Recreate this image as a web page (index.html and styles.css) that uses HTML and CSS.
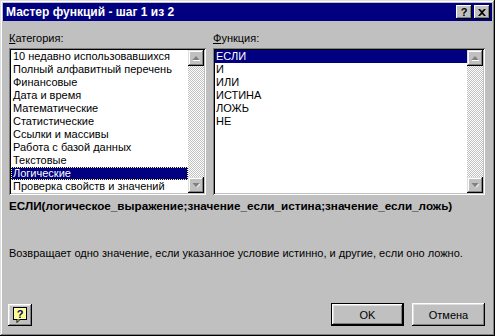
FILE: index.html
```html
<!DOCTYPE html>
<html>
<head>
  <title>Мастер функций</title>
  <link rel="stylesheet" href="styles.css">
</head>
<body>
  <div class="dialog">
    <div class="titlebar">
      <span class="title">Мастер функций - шаг 1 из 2</span>
      <div class="caption-buttons">
        <div class="caption-btn help-glyph">?</div>
        <div class="caption-btn close-btn">
          <svg width="8" height="7" viewBox="0 0 8 7">
            <path d="M0 0h2l2 2 2-2h2L5 3.5 8 7H6L4 5 2 7H0l3-3.5z" fill="#000"/>
          </svg>
        </div>
      </div>
    </div>

    <div class="content">
      <div class="columns">
        <div class="column category">
          <div class="label"><u>К</u>атегория:</div>
          <div class="listbox">
            <ul class="items">
              <li>10 недавно использовавшихся</li>
              <li>Полный алфавитный перечень</li>
              <li>Финансовые</li>
              <li>Дата и время</li>
              <li>Математические</li>
              <li>Статистические</li>
              <li>Ссылки и массивы</li>
              <li>Работа с базой данных</li>
              <li>Текстовые</li>
              <li class="selected focused">Логические</li>
              <li>Проверка свойств и значений</li>
            </ul>
            <div class="scrollbar">
              <div class="scroll-btn">
                <svg width="8" height="5" viewBox="0 0 8 5"><path d="M4 0l3.5 4h-7z" fill="#808080"/><path d="M1 4.5h7" stroke="#fff"/></svg>
              </div>
              <div class="track"></div>
              <div class="scroll-btn">
                <svg width="8" height="5" viewBox="0 0 8 5"><path d="M4 4L.5 0h7z" fill="#808080"/><path d="M5 4.5L8 1" stroke="#fff"/></svg>
              </div>
            </div>
          </div>
        </div>

        <div class="column function">
          <div class="label"><u>Ф</u>ункция:</div>
          <div class="listbox">
            <ul class="items">
              <li class="selected">ЕСЛИ</li>
              <li>И</li>
              <li>ИЛИ</li>
              <li>ИСТИНА</li>
              <li>ЛОЖЬ</li>
              <li>НЕ</li>
            </ul>
            <div class="scrollbar">
              <div class="scroll-btn">
                <svg width="8" height="5" viewBox="0 0 8 5"><path d="M4 0l3.5 4h-7z" fill="#808080"/><path d="M1 4.5h7" stroke="#fff"/></svg>
              </div>
              <div class="track"></div>
              <div class="scroll-btn">
                <svg width="8" height="5" viewBox="0 0 8 5"><path d="M4 4L.5 0h7z" fill="#808080"/><path d="M5 4.5L8 1" stroke="#fff"/></svg>
              </div>
            </div>
          </div>
        </div>
      </div>

      <div class="syntax">ЕСЛИ(логическое_выражение;значение_если_истина;значение_если_ложь)</div>
      <div class="description">Возвращает одно значение, если указанное условие истинно, и другие, если оно ложно.</div>

      <div class="footer">
        <div class="button help-btn">
          <svg width="14" height="16" viewBox="0 0 14 16">
            <rect x="0.5" y="0.5" width="13" height="12" fill="#ffff80" stroke="#000"/>
            <rect x="1.5" y="1.5" width="11" height="10" fill="none" stroke="#fff" stroke-dasharray="1 1"/>
            <path d="M4 12.5v3l3-3" fill="#ffff80" stroke="#000"/>
            <text x="7" y="10.5" text-anchor="middle" class="help-q">?</text>
          </svg>
        </div>
        <div class="spacer"></div>
        <div class="button default">OK</div>
        <div class="button">Отмена</div>
      </div>
    </div>
  </div>
</body>
</html>
```

FILE: styles.css
```css
body, html {
  margin: 0;
  padding: 0;
  background-color: #c0c0c0;
  font-family: 'Liberation Sans', Arial, sans-serif;
  font-size: 11px;
}

.dialog {
  width: 495px;
  height: 336px;
  box-sizing: border-box;
  padding: 3px;
  background-color: #c0c0c0;
  box-shadow: inset -1px -1px #000, inset 1px 1px #dfdfdf,
              inset -2px -2px #808080, inset 2px 2px #fff;
  display: flex;
  flex-direction: column;
}

.titlebar {
  height: 18px;
  background-color: #000080;
  display: flex;
  align-items: center;
  padding: 0 2px 0 3px;
}

.title {
  color: #fff;
  font-weight: bold;
  font-size: 12px;
  flex: 1;
}

.caption-buttons {
  display: flex;
  gap: 2px;
}

.caption-btn {
  width: 16px;
  height: 14px;
  background-color: #c0c0c0;
  box-shadow: inset -1px -1px #000, inset 1px 1px #fff, inset -2px -2px #808080;
  display: flex;
  align-items: center;
  justify-content: center;
}

.help-glyph {
  font-weight: bold;
  font-size: 11px;
  line-height: 14px;
  color: #000;
}

.content {
  padding: 0 7px 0 6px;
  flex: 1;
  display: flex;
  flex-direction: column;
}

.columns {
  display: flex;
  gap: 7px;
}

.column.category {
  width: 197px;
}

.column.function {
  flex: 1;
}

.label {
  line-height: 13px;
  margin: 11px 0 3px;
}

.listbox {
  height: 147px;
  box-sizing: border-box;
  padding: 2px;
  background-color: #fff;
  box-shadow: inset 1px 1px #808080, inset -1px -1px #fff,
              inset 2px 2px #000, inset -2px -2px #c0c0c0;
  display: flex;
}

.items {
  list-style: none;
  margin: 0;
  padding: 0;
  flex: 1;
  overflow: hidden;
}

.items li {
  height: 13px;
  line-height: 13px;
  padding-left: 2px;
  white-space: nowrap;
}

.function .items li {
  padding-left: 1px;
}

.items li.selected {
  background-color: #000080;
  color: #fff;
}

.items li.focused {
  outline: 1px dotted #ffff80;
  outline-offset: -1px;
}

.scrollbar {
  width: 16px;
  display: flex;
  flex-direction: column;
}

.scroll-btn {
  height: 16px;
  background-color: #c0c0c0;
  box-shadow: inset -1px -1px #000, inset 1px 1px #dfdfdf,
              inset -2px -2px #808080, inset 2px 2px #fff;
  display: flex;
  align-items: center;
  justify-content: center;
}

.track {
  flex: 1;
  background: repeating-conic-gradient(#fff 0 25%, #c0c0c0 0 50%) 0 0 / 2px 2px;
}

.syntax {
  font-weight: bold;
  font-size: 11.7px;
  line-height: 13px;
  margin-top: 4px;
  white-space: nowrap;
}

.description {
  line-height: 13px;
  margin-top: 35px;
  white-space: nowrap;
}

.footer {
  display: flex;
  gap: 8px;
  margin-top: 43px;
  align-items: center;
}

.spacer {
  flex: 1;
}

.button {
  width: 73px;
  height: 23px;
  box-sizing: border-box;
  background-color: #c0c0c0;
  box-shadow: inset -1px -1px #000, inset 1px 1px #fff,
              inset -2px -2px #808080, inset 2px 2px #dfdfdf;
  display: flex;
  align-items: center;
  justify-content: center;
  color: #000;
}

.button.default {
  border: 1px solid #000;
}

.help-btn {
  width: 24px;
  height: 22px;
  margin-left: -1px;
}

.help-q {
  font-family: 'Liberation Sans', Arial, sans-serif;
  font-weight: bold;
  font-size: 11px;
  fill: #000080;
}
```
